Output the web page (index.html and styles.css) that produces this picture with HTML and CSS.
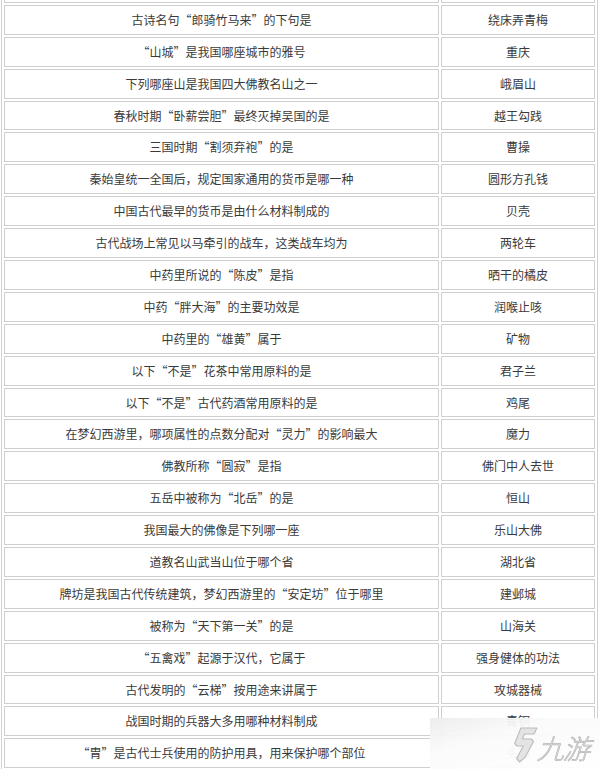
FILE: index.html
```html
<!DOCTYPE html>
<html lang="zh-CN">
<head>
<meta charset="utf-8">
<title>题目答案</title>
<link rel="stylesheet" href="styles.css">
</head>
<body>
<table class="qa">
  <tbody>
    <tr class="cut"><td class="q"></td><td class="a"></td></tr>
    <tr><td class="q">古诗名句“郎骑竹马来”的下句是</td><td class="a">绕床弄青梅</td></tr>
    <tr><td class="q">“山城”是我国哪座城市的雅号</td><td class="a">重庆</td></tr>
    <tr><td class="q">下列哪座山是我国四大佛教名山之一</td><td class="a">峨眉山</td></tr>
    <tr><td class="q">春秋时期“卧薪尝胆”最终灭掉吴国的是</td><td class="a">越王勾践</td></tr>
    <tr><td class="q">三国时期“割须弃袍”的是</td><td class="a">曹操</td></tr>
    <tr><td class="q">秦始皇统一全国后，规定国家通用的货币是哪一种</td><td class="a">圆形方孔钱</td></tr>
    <tr><td class="q">中国古代最早的货币是由什么材料制成的</td><td class="a">贝壳</td></tr>
    <tr><td class="q">古代战场上常见以马牵引的战车，这类战车均为</td><td class="a">两轮车</td></tr>
    <tr><td class="q">中药里所说的“陈皮”是指</td><td class="a">晒干的橘皮</td></tr>
    <tr><td class="q">中药“胖大海”的主要功效是</td><td class="a">润喉止咳</td></tr>
    <tr><td class="q">中药里的“雄黄”属于</td><td class="a">矿物</td></tr>
    <tr><td class="q">以下“不是”花茶中常用原料的是</td><td class="a">君子兰</td></tr>
    <tr><td class="q">以下“不是”古代药酒常用原料的是</td><td class="a">鸡尾</td></tr>
    <tr><td class="q">在梦幻西游里，哪项属性的点数分配对“灵力”的影响最大</td><td class="a">魔力</td></tr>
    <tr><td class="q">佛教所称“圆寂”是指</td><td class="a">佛门中人去世</td></tr>
    <tr><td class="q">五岳中被称为“北岳”的是</td><td class="a">恒山</td></tr>
    <tr><td class="q">我国最大的佛像是下列哪一座</td><td class="a">乐山大佛</td></tr>
    <tr><td class="q">道教名山武当山位于哪个省</td><td class="a">湖北省</td></tr>
    <tr><td class="q">牌坊是我国古代传统建筑，梦幻西游里的“安定坊”位于哪里</td><td class="a">建邺城</td></tr>
    <tr><td class="q">被称为“天下第一关”的是</td><td class="a">山海关</td></tr>
    <tr><td class="q">“五禽戏”起源于汉代，它属于</td><td class="a">强身健体的功法</td></tr>
    <tr><td class="q">古代发明的“云梯”按用途来讲属于</td><td class="a">攻城器械</td></tr>
    <tr><td class="q">战国时期的兵器大多用哪种材料制成</td><td class="a">青铜</td></tr>
    <tr><td class="q">“胄”是古代士兵使用的防护用具，用来保护哪个部位</td><td class="a">头部</td></tr>
  </tbody>
</table>
<div class="watermark">
  <svg class="wm-logo" viewBox="0 0 26 36" width="27" height="36" aria-hidden="true">
    <path d="M9 1 H25 L23 7 H13.5 L12 12 H21 L23.5 14.5 L17.5 30 L12.5 35 L9 31.5 L14 19 H7.5 L5 16.5 Z" fill="#e4e4e4" stroke="#bcbcbc" stroke-width="1.1" stroke-linejoin="round"/>
  </svg>
  <span class="wm-text">九游</span>
</div>
</body>
</html>
```

FILE: styles.css
```css
html, body {
  margin: 0;
  padding: 0;
  background: #ffffff;
}

body {
  font-family: "Noto Sans CJK SC", "Microsoft YaHei", sans-serif;
  font-size: 12px;
  color: #3a3a3a;
  overflow: hidden;
}

.qa {
  width: 597px;
  margin: -30px 0 0 1px;
  border: 1px solid #d2d2d2;
  border-collapse: separate;
  border-spacing: 2px;
  table-layout: fixed;
}

.qa td {
  box-sizing: border-box;
  height: 29.9px;
  padding: 0 4px;
  border: 1px solid #cfcfcf;
  text-align: center;
  vertical-align: middle;
  line-height: 16px;
  white-space: nowrap;
}

.qa td.q {
  width: 435px;
}

.qa td.a {
  width: 154px;
}

.watermark {
  position: fixed;
  right: 0;
  bottom: 0;
  width: 170px;
  height: 51px;
  box-sizing: border-box;
  padding: 3px 2px 0 79px;
  display: flex;
  align-items: center;
  gap: 4px;
  background: linear-gradient(165deg, rgba(236,236,236,0.93) 0%, rgba(250,250,250,0.95) 35%, rgba(255,255,255,0.96) 100%);
}

.wm-logo {
  flex: none;
  transform: skewX(-8deg);
}

.wm-text {
  display: inline-block;
  font-family: "Noto Sans CJK SC", sans-serif;
  font-size: 27px;
  line-height: 28px;
  font-weight: 300;
  color: #e2e2e2;
  -webkit-text-stroke: 0.7px #b8b8b8;
  transform: skewX(-16deg);
  letter-spacing: -1px;
  margin-top: 6px;
}
```
